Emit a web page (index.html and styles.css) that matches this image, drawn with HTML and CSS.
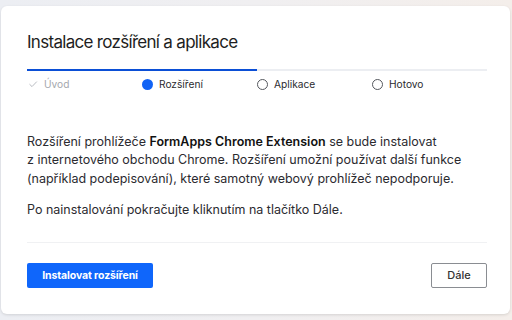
FILE: index.html
```html
<!DOCTYPE html>
<html lang="cs">
<head>
<meta charset="utf-8">
<link rel="stylesheet" href="styles.css">
</head>
<body>
<div class="card">
  <h1 class="title">Instalace rozšíření a aplikace</h1>
  <div class="progress"><div class="progress-fill"></div></div>
  <ol class="steps">
    <li class="step done">
      <svg class="ico" viewBox="0 0 10 10" width="10" height="10"><path d="M1.5 5.2 L4 7.6 L8.8 2.6" fill="none" stroke="#b9bcc2" stroke-width="1"/></svg>
      <span>Úvod</span>
    </li>
    <li class="step active">
      <span class="dot"></span>
      <span>Rozšíření</span>
    </li>
    <li class="step">
      <span class="ring"></span>
      <span>Aplikace</span>
    </li>
    <li class="step">
      <span class="ring"></span>
      <span>Hotovo</span>
    </li>
  </ol>
  <div class="body">
    <p>Rozšíření prohlížeče <strong>FormApps Chrome Extension</strong> se bude instalovat z&nbsp;internetového obchodu Chrome. Rozšíření umožní používat další funkce (například podepisování), které samotný webový prohlížeč nepodporuje.</p>
    <p>Po nainstalování pokračujte kliknutím na tlačítko Dále.</p>
  </div>
  <div class="footer">
    <button class="btn primary">Instalovat rozšíření</button>
    <button class="btn secondary">Dále</button>
  </div>
</div>
</body>
</html>
```
FILE: styles.css
```css
html, body {
  margin: 0;
  padding: 0;
}
body {
  width: 512px;
  height: 320px;
  overflow: hidden;
  background: linear-gradient(90deg, #eceef3 0%, #f0eff1 50%, #f4eeea 100%);
  font-family: Inter, "Noto Sans", sans-serif;
  color: #1f1f23;
  padding: 6px 2px 0 1px;
  box-sizing: border-box;
}
.card {
  background: #fff;
  border-radius: 6px;
  box-shadow: 0 1px 3px rgba(0,0,0,0.12);
  height: 308px;
  padding: 0 23px 0 26px;
  box-sizing: border-box;
  display: flex;
  flex-direction: column;
}
.title {
  margin: 25px 0 0 0;
  font-size: 17px;
  letter-spacing: -0.7px;
  font-weight: 400;
  line-height: 22px;
  color: #1e1e22;
}
.progress {
  margin-top: 16px;
  height: 2px;
  background: #eceef2;
}
.progress-fill {
  width: 50%;
  height: 100%;
  background: #0b4fd6;
}
.steps {
  list-style: none;
  margin: 5px 0 0 0;
  padding: 0;
  display: grid;
  grid-template-columns: repeat(4, 1fr);
  font-size: 10.2px;
  line-height: 16px;
}
.step {
  display: flex;
  align-items: center;
  gap: 6px;
  color: #2a2a2e;
}
.step.done {
  color: #a5a8ad;
  gap: 6px;
}
.ico { display: block; margin-left: 1px; }
.dot {
  width: 11px;
  height: 11px;
  border-radius: 50%;
  background: #1163f5;
}
.ring {
  width: 9px;
  height: 9px;
  border-radius: 50%;
  border: 1px solid #55585e;
}
.body {
  margin-top: 40.5px;
  font-size: 12.5px;
  line-height: 18.5px;
  color: #2b2b30;
  padding-bottom: 22.5px;
  border-bottom: 1px solid #f0f1f3;
}
.body p { margin: 0; }
.body p + p { margin-top: 12.5px; }
.body strong { font-weight: 600; color: #111; }
.footer {
  display: flex;
  justify-content: space-between;
  margin-top: 20px;
}
.btn {
  font-family: Inter, "Noto Sans", sans-serif;
  font-size: 11px;
  height: 25px;
  border-radius: 2px;
  cursor: pointer;
}
.primary {
  background: #0f66fb;
  color: #fff;
  border: none;
  font-weight: 700;
  font-size: 10.5px;
  letter-spacing: -0.1px;
  width: 126px;
  padding: 0;
}
.secondary {
  background: #fff;
  color: #333;
  border: 1px solid #8a8d92;
  width: 56px;
  font-weight: 500;
  padding: 0;
}
```
